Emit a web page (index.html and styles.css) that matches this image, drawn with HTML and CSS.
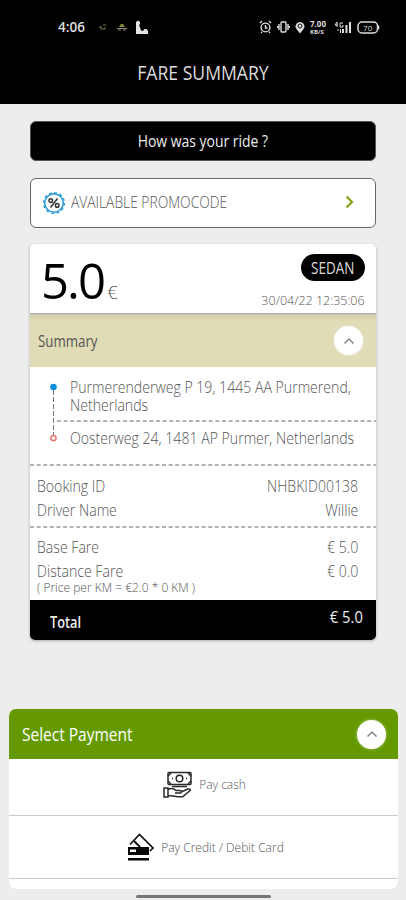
FILE: index.html
```html
<!DOCTYPE html>
<html lang="en">
<head>
<meta charset="utf-8">
<meta name="viewport" content="width=device-width">
<title>Fare Summary</title>
<link rel="stylesheet" href="styles.css">
</head>
<body>
<header class="header">
  <div class="status">
    <div class="status-left">
      <span class="clock">4:06</span>
      <svg class="mini" width="9" height="8" viewBox="0 0 9 8"><path d="M1 4h3M5 2h3M7 4v2H3v-2" fill="none" stroke="#77754a" stroke-width="1"/></svg>
      <svg class="mini2" width="12" height="8" viewBox="0 0 12 8"><path d="M3 4l2-3h2l2 3" fill="#8b8a3c"/><path d="M1 5.500h10M2 7h3M7 7h3" stroke="#8a8872"/></svg>
      <svg class="boot" width="14" height="15" viewBox="0 0 14 15"><path d="M1 2L3 .5 5 2v2.500H4L6 10.500l2 .5 1.500-2h2l1.500 2v3H1z" fill="#e4e4e4"/></svg>
    </div>
    <div class="status-right">
      <svg width="13" height="14" viewBox="0 0 13 14" fill="none" stroke="#ddd" stroke-width="1.4"><circle cx="6.500" cy="7.500" r="4.400"/><path d="M1 3l2-2M12 3l-2-2M6.500 5v3h2M3 12l-1 1M10 12l1 1"/></svg>
      <svg width="13" height="12" viewBox="0 0 13 12" fill="none" stroke="#ddd" stroke-width="1.4"><rect x="4" y="1" width="5" height="10" rx="1"/><path d="M2 3v6M11 3v6M.5 5v2M12.500 5v2"/></svg>
      <svg class="pin" width="10" height="13" viewBox="0 0 10 13"><path d="M5 12.500L1.500 8A4.300 4.300 0 1 1 8.500 8z" fill="#ddd"/><circle cx="5" cy="5" r="2" fill="none" stroke="#000" stroke-width=".9"/></svg>
      <span class="speed"><b>7.00</b><b class="unit">KB/S</b></span>
      <svg class="signal" width="18" height="13" viewBox="0 0 18 13"><path d="M3 1L1 4h3M3 1v5M9 2H6v4h3V4M4 10V8M6.500 12V8" fill="none" stroke="#ddd" stroke-width="1"/><path d="M8 8h2v4H8zM11.500 4h2v8h-2zM15 1h2v11h-2z" fill="#ddd"/></svg>
      <svg class="battery" width="23" height="13" viewBox="0 0 23 13"><rect x="1" y="1" width="19.500" height="11" rx="4" fill="none" stroke="#ddd" stroke-width="1.500"/><path d="M21.500 4.500v4" stroke="#ddd" stroke-width="1.500"/><text x="10.700" y="9.500" text-anchor="middle" class="bat-text">70</text></svg>
    </div>
  </div>
  <h1 class="title">FARE SUMMARY</h1>
</header>
<main class="content">
  <div class="rate"><span>How was your ride ?</span></div>
  <div class="promo">
    <svg width="24" height="24" viewBox="0 0 24 24"><circle cx="12" cy="12" r="9.300" fill="none" stroke="#2697d8" stroke-width="1.500"/><circle cx="12" cy="12" r="10.400" fill="none" stroke="#2697d8" stroke-width="1.300" stroke-dasharray="2.700 2.745"/><g fill="none" stroke="#333" stroke-width="1.500"><circle cx="8.800" cy="9.600" r="1.800"/><circle cx="15.200" cy="14.400" r="1.800"/><path d="M15.500 7.500l-7 9"/></g></svg>
    <span class="promo-label">AVAILABLE PROMOCODE</span>
    <svg class="promo-arrow" width="9" height="14" viewBox="0 0 9 14"><path d="M1.500 1.500L7 7l-5.500 5.500" fill="none" stroke="#86a51a" stroke-width="2.200"/></svg>
  </div>
  <section class="card">
    <div class="price-row">
      <div class="price"><span class="amount">5.0</span><span class="euro">€</span></div>
      <div class="ride-meta"><div class="tag"><span>SEDAN</span></div><span class="date">30/04/22 12:35:06</span></div>
    </div>
    <div class="summary"><span class="summary-label">Summary</span><span class="circle"><svg width="12" height="8" viewBox="0 0 12 8"><path d="M1.500 6.500L6 2l4.500 4.500" fill="none" stroke="#858585" stroke-width="1.500"/></svg></span></div>
    <div class="route">
      <svg width="10" height="60" viewBox="0 0 10 60"><path d="M4.500 7v46" stroke="#777" stroke-width="1" stroke-dasharray="5 2"/><circle cx="4.500" cy="4" r="3.300" fill="#0c8fdf"/><circle cx="4.500" cy="55" r="2.600" fill="#fff" stroke="#e4766b" stroke-width="1.500"/></svg>
      <div class="places">
        <div class="from"><span>Purmerenderweg P 19, 1445 AA Purmerend,</span><span>Netherlands</span></div>
        <svg class="dash" height="2"><line x1="0" x2="100%" y1="1" y2="1"/></svg>
        <div class="to"><span>Oosterweg 24, 1481 AP Purmer, Netherlands</span></div>
      </div>
    </div>
    <svg class="dash" height="2"><line x1="0" x2="100%" y1="1" y2="1"/></svg>
    <div class="lines booking">
      <div class="line"><span>Booking ID</span><span>NHBKID00138</span></div>
      <div class="line"><span>Driver Name</span><span>Willie</span></div>
    </div>
    <svg class="dash" height="2"><line x1="0" x2="100%" y1="1" y2="1"/></svg>
    <div class="lines fares">
      <div class="line"><span>Base Fare</span><span>€ 5.0</span></div>
      <div class="line"><span>Distance Fare</span><span>€ 0.0</span></div>
      <div class="note"><span>( Price per KM = €2.0 * 0 KM )</span></div>
    </div>
    <div class="total"><b>Total</b><span>€ 5.0</span></div>
  </section>
</main>
<section class="payment">
  <div class="pay-head"><span class="pay-title">Select Payment</span><span class="circle"><svg width="12" height="8" viewBox="0 0 12 8"><path d="M1.500 6.500L6 2l4.500 4.500" fill="none" stroke="#858585" stroke-width="1.500"/></svg></span></div>
  <div class="option cash">
    <svg width="30" height="28" viewBox="0 0 30 28" fill="none" stroke="#292929" stroke-width="1.500"><rect x="5" y="1.500" width="23" height="12" rx="1"/><circle cx="16.500" cy="7.500" r="3.300"/><path d="M5 5l3-3M25 2l3 3M5 10l3 3M25 13l3-3M9 7.500h1M23 7.500h1M9 15.500h15"/><path d="M1 17h4v9H1zM5 18.500c4-2 6-1 8 1h4c2 0 2 2.500 0 2.500h-5M18 21l7-3c2-.5 3 1 1.500 2L20 25.500c-5 1-9-1-15-1"/></svg>
    <span>Pay cash</span>
  </div>
  <div class="option cards">
    <svg width="28" height="28" viewBox="0 0 28 28"><path d="M3 11.500L12.500 1.500 26 15l-3 3" fill="none" stroke="#111" stroke-width="1.700"/><path d="M7 8l6 6" stroke="#111" stroke-width="2"/><path d="M1 14h21v8H1zM1 25h21v2.500H1z" fill="#080808"/><rect x="3" y="16.500" width="6" height="2.500" fill="#fff"/></svg>
    <span>Pay Credit / Debit Card</span>
  </div>
</section>
<div class="home"></div>
</body>
</html>
```
FILE: styles.css
```css
* { box-sizing: border-box; }
body { margin: 0; height: 900px; overflow: hidden; display: flex; flex-direction: column; background: #ededed; color: #555; font-family: "Open Sans", "Noto Sans", sans-serif; font-weight: 300; font-size: 15.5px; }
svg { display: block; flex: none; }
span { white-space: nowrap; }
.header { height: 104px; flex: none; background: #000; color: #ddd; }
.status { height: 54px; padding: 0 26px 0 58px; display: flex; justify-content: space-between; align-items: center; }
.status-left, .status-right { display: flex; align-items: center; }
.clock { font-size: 13.5px; font-weight: 600; width: 28px; }
.mini { margin-left: 12px; }
.mini2 { margin-left: 9px; }
.boot { margin-left: 7px; }
.status-right { gap: 5px; }
.speed { display: flex; flex-direction: column; gap: 1px; width: 19px; font-size: 8px; line-height: 8px; }
.speed b { font-weight: 700; }
.speed .unit { font-size: 6px; line-height: 6px; }
.bat-text { font: 8px "Open Sans", sans-serif; fill: #ddd; }
.title { margin: 6px 0 0; text-align: center; font-size: 20px; line-height: 26px; font-weight: 400; transform: scaleX(.88); }
.content { padding: 17px 30px 0; flex: none; }
.rate { height: 40px; border: 1px solid #555; border-radius: 6px; background: #000; color: #eee; display: flex; align-items: center; justify-content: center; font-size: 16px; font-weight: 400; }
.rate span { transform: scaleX(.87); }
.promo { height: 50px; margin-top: 17px; padding: 0 21px 0 11px; border: 1px solid #666; border-radius: 6px; background: #fff; display: flex; align-items: center; }
.promo-label { margin: -2px 0 0 5px; flex: 1; font-size: 16px; transform: scaleX(.863); transform-origin: left; }
.promo-arrow { margin-top: -3px; }
.card { height: 396px; margin-top: 16px; border-radius: 5px; overflow: hidden; background: #fff; box-shadow: 0 1px 3px #aaa; }
.price-row { height: 70px; display: flex; justify-content: space-between; padding: 0 11px; border-bottom: 1px solid #aaa; }
.price { display: flex; align-items: baseline; line-height: 72px; }
.amount { font-size: 49px; color: #000; letter-spacing: -2px; font-weight: 400; }
.euro { font-size: 19px; margin-left: 3px; }
.ride-meta { display: flex; flex-direction: column; align-items: flex-end; }
.tag { margin-top: 10px; width: 64px; height: 27px; border-radius: 14px; background: #000; color: #ddd; display: flex; justify-content: center; align-items: center; font-size: 16px; font-weight: 400; }
.tag span { transform: scaleX(.84); }
.date { margin-top: 9px; line-height: 20px; font-size: 13.5px; transform: scaleX(.925); transform-origin: right; }
.summary { height: 53px; background: linear-gradient(#cdcaa6, #dfdcb6 7px); padding: 0 13px 0 8px; display: flex; align-items: center; justify-content: space-between; font-weight: 400; font-size: 16px; }
.summary-label { transform: scaleX(.83); transform-origin: left; }
.circle { width: 29px; height: 29px; border-radius: 50%; background: #fff; display: flex; align-items: center; justify-content: center; box-shadow: 0 0 3px #fff8; }
.route { height: 97px; display: flex; padding: 16px 0 0 19px; }
.places { margin: -6px 0 0 -2px; flex: 1; min-width: 0; }
.from, .to { padding-left: 13px; line-height: 18px; }
.places span { display: block; transform: scaleX(.91); transform-origin: left; }
.from { height: 43px; padding-top: 1px; }
.to { padding-top: 7px; }
.dash { width: 100%; height: 2px; }
.dash line { stroke: #999; stroke-width: 1.5; stroke-dasharray: 4 2.6; }
.lines { padding: 0 18px 0 7px; }
.line { height: 24px; display: flex; justify-content: space-between; line-height: 24px; }
.line span { transform: scaleX(.91); }
.line span:first-child { transform-origin: left; }
.line span:last-child { transform-origin: right; }
.booking { padding-top: 8px; height: 60px; }
.fares { padding-top: 7px; height: 72px; }
.note { font-size: 12px; line-height: 9px; }
.total { height: 40px; background: #000; color: #eee; padding: 0 13px 0 20px; display: flex; justify-content: space-between; line-height: 44px; font-size: 16px; }
.total b { font-weight: 600; transform: scaleX(.8); transform-origin: left; }
.total span { line-height: 34px; font-weight: 400; transform: scaleX(.92); transform-origin: right; }
.payment { width: 389px; height: 180px; flex: none; margin: 69px 0 0 9px; border-radius: 7px 7px 8px 8px; background: #fff; overflow: hidden; }
.pay-head { height: 50px; background: #649a00; color: #fff; padding: 0 12px 0 13px; display: flex; align-items: center; justify-content: space-between; font-size: 19px; font-weight: 400; }
.pay-title { transform: scaleX(.815); transform-origin: left; }
.option { display: flex; justify-content: center; border-bottom: 1px solid #ccc; align-items: center; font-size: 12px; }
.cash { height: 57px; gap: 6px; padding: 0 0 5px 2px; }
.cards { height: 63px; gap: 6px; padding-left: 4px; }
.home { width: 135px; height: 3px; flex: none; margin: 6px auto 0; border-radius: 2px; background: #777; }
```
